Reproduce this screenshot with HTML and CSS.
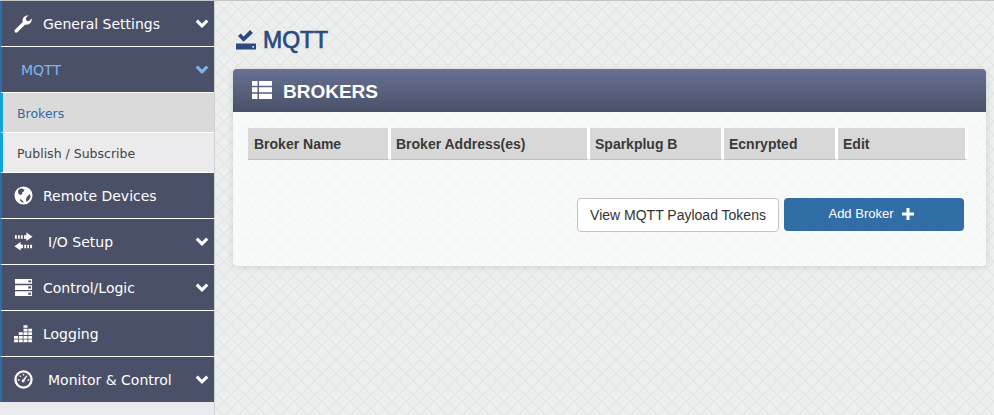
FILE: index.html
```html
<!doctype html>
<html lang="en">

<head>
  <meta charset="UTF-8" />
  <title>MQTT Brokers</title>
  <link rel="stylesheet" href="styles.css">
</head>

<body>
  <nav class="sidebar">
    <a class="nav-item">
      <svg class="nav-icon" viewBox="0 0 20 20"><path d="M1 16.6 9.2 8.4C8.300 5.300 10.300 1.500 15.300 1.300L12.400 4.300 13 7 15.700 7.700 18.800 4.700C19 9.500 15 12 11.800 11L3.500 19.200C2.800 19.900 1.800 19.800 1.100 19.100 .4 18.400.3 17.300 1 16.600Z"/></svg>
      <span class="nav-label">General Settings</span>
      <svg class="chevron" viewBox="0 0 12 9"><path d="M1.500 2 6 6.500 10.500 2" /></svg>
    </a>
    <a class="nav-item nav-open">
      <span class="nav-label nav-label-plain">MQTT</span>
      <svg class="chevron" viewBox="0 0 12 9"><path d="M1.500 2 6 6.500 10.500 2" /></svg>
    </a>
    <a class="sub-item sub-active">Brokers</a>
    <a class="sub-item">Publish / Subscribe</a>
    <a class="nav-item">
      <svg class="nav-icon" viewBox="0 0 20 20"><path fill-rule="evenodd" d="M10 .5a9.500 9.500 0 1 0 0 19 9.500 9.500 0 0 0 0-19ZM6 2.800 8.500 2.500 11 4 10 6 8.500 6.500 8.800 8.500 6.500 9.500 4.500 8 4.200 5ZM16.500 8.500 17.500 11.500 15.500 15 13 16.500 12.500 14 13.500 11.500ZM6.500 13.500 9 15.500 10.500 17.500 8.500 17.200 6.500 15.500Z"/></svg>
      <span class="nav-label">Remote Devices</span>
    </a>
    <a class="nav-item">
      <svg class="nav-icon" viewBox="0 0 20 20"><path d="M13 .5 19.500 5 13 9.500V7H10.500V3.500H13ZM1 3.500H3V7H1ZM4.200 3.500H6V7H4.200ZM7.200 3.500H9.200V7H7.200ZM7 10.500 .5 15 7 19.500V17H9.500V13.500H7ZM10.800 13.500H12.800V17H10.800ZM14 13.500H15.800V17H14ZM17 13.500H19V17H17Z"/></svg>
      <span class="nav-label nav-label-wide">I/O Setup</span>
      <svg class="chevron" viewBox="0 0 12 9"><path d="M1.500 2 6 6.500 10.500 2" /></svg>
    </a>
    <a class="nav-item">
      <svg class="nav-icon" viewBox="0 0 20 20"><path fill-rule="evenodd" d="M1 1H19V6H1ZM15 2.500V4.500H18V2.500ZM1 7.500H19V12.500H1ZM15 9V11H18V9ZM1 14H19V19H1ZM15 15.500V17.500H18V15.500Z"/></svg>
      <span class="nav-label">Control/Logic</span>
      <svg class="chevron" viewBox="0 0 12 9"><path d="M1.500 2 6 6.500 10.500 2" /></svg>
    </a>
    <a class="nav-item">
      <svg class="nav-icon" viewBox="0 0 20 20"><path d="M0 12.600H4.200V15.400H0ZM0 16.400H4.200V19.200H0ZM5 8.800H9.200V11.600H5ZM5 12.600H9.200V15.400H5ZM5 16.400H9.200V19.200H5ZM10 1.200H14.200V4H10ZM10 5H14.200V7.800H10ZM10 8.800H14.200V11.600H10ZM10 12.600H14.200V15.400H10ZM10 16.400H14.200V19.200H10ZM15 5H19V7.800H15ZM15 8.800H19V11.600H15ZM15 12.600H19V15.400H15ZM15 16.400H19V19.200H15Z"/></svg>
      <span class="nav-label">Logging</span>
    </a>
    <a class="nav-item nav-last">
      <svg class="nav-icon" viewBox="0 0 20 20"><path fill-rule="evenodd" d="M10 .3a9.700 9.700 0 1 0 0 19.400 9.700 9.700 0 0 0 0-19.400ZM10 2.700a7.300 7.300 0 1 1 0 14.600 7.300 7.300 0 0 1 0-14.600ZM9.300 4.200H10.700V5.800H9.300ZM5.500 6.300 6.500 5.400 7.600 6.600 6.600 7.600ZM13 5.700 14 6.300 11.200 10.800A1.600 1.600 0 1 1 9.800 9.800ZM4 9.800H5.700V11.200H4ZM14.300 9.800H16V11.200H14.300Z"/></svg>
      <span class="nav-label nav-label-wide">Monitor &amp; Control</span>
      <svg class="chevron" viewBox="0 0 12 9"><path d="M1.500 2 6 6.500 10.500 2" /></svg>
    </a>
  </nav>

  <main class="content">
    <h1 class="page-title">
      <svg class="title-icon" viewBox="0 0 20 20"><path d="M2 6 4.600 3.400 7.600 6.400 14 0 17 3 7.600 11.800ZM0 13.500H20V19.500H0Z"/><rect x="16.400" y="16" width="1.600" height="1.600" fill="#eceeee"/></svg>
      MQTT
    </h1>

    <section class="panel">
      <header class="panel-head">
        <svg class="panel-icon" viewBox="0 0 20 18"><path d="M0 0H5.500V4.800H0ZM7 0H20V4.800H7ZM0 6.200H5.500V11.300H0ZM7 6.200H20V11.300H7ZM0 12.700H5.500V18H0ZM7 12.700H20V18H7Z"/></svg>
        <h2>BROKERS</h2>
      </header>
      <div class="panel-body">
        <table class="broker-table">
          <thead>
            <tr>
              <th class="col-name">Broker Name</th>
              <th class="col-address">Broker Address(es)</th>
              <th class="col-spark">Sparkplug B</th>
              <th class="col-enc">Ecnrypted</th>
              <th>Edit</th>
            </tr>
          </thead>
        </table>
        <div class="actions">
          <button class="btn btn-light">View MQTT Payload Tokens</button>
          <button class="btn btn-primary">Add Broker
            <svg class="plus" viewBox="0 0 12 12"><path d="M4.500 0H7.500V4.500H12V7.500H7.500V12H4.500V7.500H0V4.500H4.500Z"/></svg>
          </button>
        </div>
      </div>
    </section>
  </main>
</body>

</html>
```

FILE: styles.css
```css
* {
  box-sizing: border-box;
}

body {
  margin: 0;
  height: 415px;
  overflow: hidden;
  display: flex;
  font-family: "DejaVu Sans", sans-serif;
  background-color: #edeeee;
  background-image:
    repeating-linear-gradient(45deg, transparent 0 8.900px, #e5e7e7 8.900px 9.900px),
    repeating-linear-gradient(-45deg, transparent 0 8.900px, #e5e7e7 8.900px 9.900px);
  border-top: 1px solid #c4c6c6;
}

/* sidebar */
.sidebar {
  width: 215px;
  flex-shrink: 0;
  background: #e8eaeb;
  border-right: 1px solid #cfd1d1;
}

.nav-item {
  height: 46px;
  display: flex;
  align-items: center;
  padding: 1px 5px 0 12px;
  background: #4a5068;
  border-left: 2px solid #2a6ead;
  border-bottom: 1px solid #fff;
  color: #fff;
  font-size: 14px;
}

.nav-last {
  height: 45px;
  padding-top: 0;
  border-bottom: 0;
}

.nav-icon {
  width: 19px;
  height: 19px;
  margin-top: -1px;
  fill: #fff;
  flex-shrink: 0;
}

.nav-label {
  margin-left: 10px;
  flex: 1;
}

.nav-label-wide {
  margin-left: 15px;
}

.nav-label-plain {
  margin-left: 7px;
}

.chevron {
  width: 14px;
  height: 11px;
  margin-top: -1px;
  fill: none;
  stroke: #fff;
  stroke-width: 2.600;
}

.nav-open {
  color: #7fb5ea;
}

.nav-open .chevron {
  stroke: #7fb5ea;
}

.sub-item {
  height: 40px;
  display: flex;
  align-items: center;
  padding: 1px 0 0 14px;
  background: #ebebed;
  border-left: 3px solid #0ea5dc;
  border-bottom: 1px solid #fff;
  color: #444;
  font-size: 12.500px;
}

.sub-active {
  background: #dadada;
  color: #2d6ca8;
}

/* main area */
.content {
  flex: 1;
  padding: 25px 11px 0 18px;
}

.page-title {
  margin: 0 0 15px;
  height: 28px;
  display: flex;
  align-items: center;
  gap: 7px;
  padding-top: 1px;
  font-family: "Liberation Sans", Arial, sans-serif;
  font-size: 23px;
  font-weight: 400;
  -webkit-text-stroke: .7px #2a4a80;
  color: #2a4a80;
}

.title-icon {
  width: 20px;
  height: 20px;
  fill: #2a4a80;
  margin: -2px 0 0 3px;
}

.panel {
  height: 197px;
  background: rgba(255, 255, 255, .62);
  border-radius: 4px;
  box-shadow: 0 1px 6px rgba(0, 0, 0, .12);
  font-family: "Liberation Sans", Arial, sans-serif;
}

.panel-head {
  height: 43px;
  display: flex;
  align-items: center;
  gap: 11px;
  padding-left: 19px;
  border-radius: 4px 4px 0 0;
  background: linear-gradient(#687194, #4a5068);
}

.panel-icon {
  width: 20px;
  height: 18px;
  margin-top: -1px;
  fill: #fff;
}

.panel-head h2 {
  margin: 2px 0 0;
  color: #fff;
  font-size: 19px;
  font-weight: 700;
}

.panel-body {
  padding: 16px 18px 0 15px;
}

.broker-table {
  width: 720px;
  border-collapse: separate;
  border-spacing: 0;
  table-layout: fixed;
}

.broker-table th {
  height: 32px;
  padding: 0 5px;
  background: #d8d8d8;
  border-right: 3px solid #fff;
  border-bottom: 1px solid #9cc6f0;
  color: #3a3a3a;
  font-size: 14px;
  text-align: left;
}

.broker-table th.col-name {
  padding-left: 6px;
}

.col-name {
  width: 143px;
}

.col-address {
  width: 199px;
}

.col-spark {
  width: 134px;
}

.col-enc {
  width: 114px;
}

.actions {
  display: flex;
  justify-content: flex-end;
  align-items: flex-start;
  gap: 5px;
  margin: 38px 1px 0 0;
  padding-right: 3px;
}

.btn {
  font-family: inherit;
  border-radius: 4px;
}

.btn-light {
  width: 202px;
  height: 34px;
  background: #fff;
  border: 1px solid #c4c4c4;
  color: #333;
  font-size: 14px;
  padding: 0;
}

.btn-primary {
  width: 180px;
  height: 33px;
  display: flex;
  align-items: center;
  justify-content: center;
  gap: 8px;
  background: #316ea6;
  border: 0;
  color: #fff;
  font-size: 13px;
  padding: 0 6px 2px 0;
}

.plus {
  width: 12px;
  height: 12px;
  fill: #fff;
}
```
